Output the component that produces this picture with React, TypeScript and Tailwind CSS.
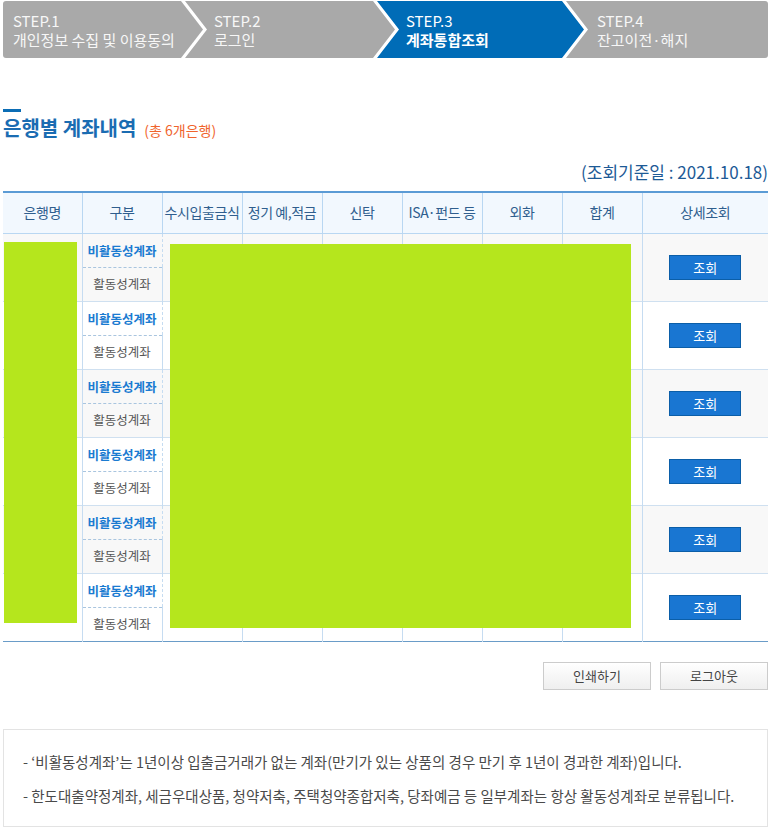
const steps = [
  { no: "STEP.1", label: "개인정보 수집 및 이용동의", active: false },
  { no: "STEP.2", label: "로그인", active: false },
  { no: "STEP.3", label: "계좌통합조회", active: true },
  { no: "STEP.4", label: "잔고이전·해지", active: false },
];

const headers = ["은행명", "구분", "수시입출금식", "정기 예,적금", "신탁", "ISA·펀드 등", "외화", "합계", "상세조회"];

const banks = [0, 1, 2, 3, 4, 5];

function StepBar() {
  return (
    <div className="mt-px flex h-[57px] text-[15px] leading-[19px] text-[#f7f7f7]">
      <div className="flex w-[200px] flex-col justify-center rounded-l-[3px] bg-[#a9a9a9] pl-[10px] [clip-path:polygon(0_0,calc(100%_-_22px)_0,100%_50%,calc(100%_-_22px)_100%,0_100%)]">
        <span>{steps[0].no}</span>
        <span className="whitespace-nowrap">{steps[0].label}</span>
      </div>
      <div className="-ml-[18px] flex w-[210px] flex-col justify-center bg-[#a9a9a9] pl-[29px] [clip-path:polygon(0_0,calc(100%_-_22px)_0,100%_50%,calc(100%_-_22px)_100%,0_100%,22px_50%)]">
        <span>{steps[1].no}</span>
        <span>{steps[1].label}</span>
      </div>
      <div className="-ml-[18px] flex w-[207px] flex-col justify-center bg-[#006cb7] pl-[29px] text-white [clip-path:polygon(0_0,calc(100%_-_22px)_0,100%_50%,calc(100%_-_22px)_100%,0_100%,22px_50%)]">
        <span>{steps[2].no}</span>
        <span className="font-bold">{steps[2].label}</span>
      </div>
      <div className="-ml-[18px] flex flex-1 flex-col justify-center rounded-r-[3px] bg-[#a9a9a9] pl-[31px] [clip-path:polygon(0_0,100%_0,100%_100%,0_100%,22px_50%)]">
        <span>{steps[3].no}</span>
        <span>{steps[3].label}</span>
      </div>
    </div>
  );
}

function BankRows({ idx }: { idx: number }) {
  const bg = idx % 2 === 0 ? "bg-[#f8f8f8]" : "bg-white";
  const cell = "border-r border-[#c6dcf1]";
  return (
    <>
      <tr className={`${bg} h-[34px]`}>
        <td rowSpan={2} className={cell}></td>
        <td className={`${cell} border-b border-dashed border-b-[#a9c5df] pt-[3px] text-center text-[12.5px] font-bold text-[#1a7bd1]`}>
          비활동성계좌
        </td>
        {[0, 1, 2, 3, 4, 5].map((c) => (
          <td key={c} rowSpan={2} className={cell}></td>
        ))}
        <td rowSpan={2} className="text-center">
          <button className="inline-flex h-[25px] w-[72px] items-center justify-center border border-[#0b5ea8] bg-[#1976d2] text-[13px] text-white">
            조회
          </button>
        </td>
      </tr>
      <tr className={`${bg} h-[34px] border-b border-[#cfe0f0] last:border-b-0`}>
        <td className={`${cell} text-center text-[12.5px] text-[#555]`}>활동성계좌</td>
      </tr>
    </>
  );
}

export default function App() {
  return (
    <div className="min-h-[832px] bg-white px-[3px] font-['Noto_Sans_CJK_KR','Noto_Sans',sans-serif]">
      <StepBar />

      <div className="mt-[51px] h-[3px] w-[18px] bg-[#0b6db5]"></div>
      <h2 className="mt-[3px] flex items-baseline gap-[8px] text-[20px] font-bold leading-[25px] text-[#1a6cb2]">
        은행별 계좌내역
        <span className="text-[14px] font-normal text-[#f0642d]">(총 6개은행)</span>
      </h2>

      <p className="mt-[18px] text-right text-[17px] leading-[21px] text-[#1d5a96]">(조회기준일 : 2021.10.18)</p>

      <div className="relative mt-[9px]">
        <table className="w-[765px] table-fixed border-collapse border-t-2 border-b border-t-[#5b9bd5] border-b-[#6a9cc8]">
          <colgroup>
            <col className="w-[79px]" />
            <col className="w-[80px]" />
            <col className="w-[80px]" />
            <col className="w-[80px]" />
            <col className="w-[80px]" />
            <col className="w-[80px]" />
            <col className="w-[80px]" />
            <col className="w-[80px]" />
            <col className="w-[126px]" />
          </colgroup>
          <thead>
            <tr className="h-[41px] border-b border-[#b9d7f2] bg-[#f2f8fe]">
              {headers.map((h, i) => (
                <th
                  key={h}
                  className={`whitespace-nowrap p-0 text-center text-[14px] font-normal tracking-[-0.4px] text-[#2f5e8e] ${
                    i < headers.length - 1 ? "border-r border-[#b9d7f2]" : ""
                  }`}
                >
                  {h}
                </th>
              ))}
            </tr>
          </thead>
          <tbody>
            {banks.map((b) => (
              <BankRows key={b} idx={b} />
            ))}
          </tbody>
        </table>

        {/* redacted areas */}
        <div className="absolute left-[1px] top-[51px] h-[381px] w-[73px] bg-[#b5e61d]"></div>
        <div className="absolute left-[167px] top-[53px] h-[384px] w-[461px] bg-[#b5e61d]"></div>
      </div>

      <div className="mt-[20px] flex justify-end gap-[9px]">
        <button className="h-[28px] w-[108px] border border-[#cccccc] bg-gradient-to-b from-white to-[#efefef] text-[13px] text-[#444]">
          인쇄하기
        </button>
        <button className="h-[28px] w-[108px] border border-[#cccccc] bg-gradient-to-b from-white to-[#efefef] text-[13px] text-[#444]">
          로그아웃
        </button>
      </div>

      <div className="mt-[39px] border border-[#e3e3e3] px-[19px] pb-[20px] pt-[22px] text-[14.5px] leading-[20px] text-[#4a4a4a]">
        <p className="whitespace-nowrap">- ‘비활동성계좌’는 1년이상 입출금거래가 없는 계좌(만기가 있는 상품의 경우 만기 후 1년이 경과한 계좌)입니다.</p>
        <p className="mt-[14px] whitespace-nowrap">- 한도대출약정계좌, 세금우대상품, 청약저축, 주택청약종합저축, 당좌예금 등 일부계좌는 항상 활동성계좌로 분류됩니다.</p>
      </div>
    </div>
  );
}
